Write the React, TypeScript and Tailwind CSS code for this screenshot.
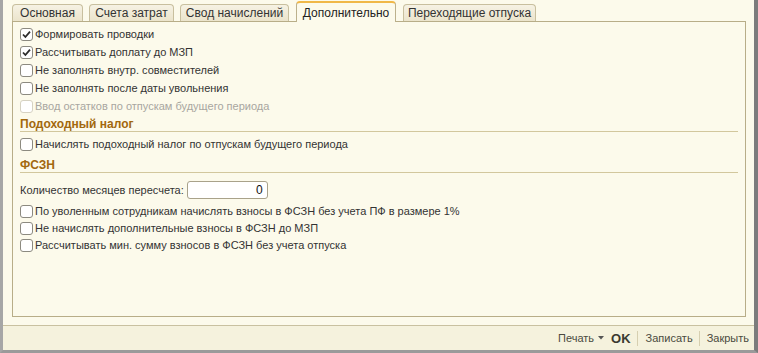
import React from 'react';

const tabs = [
  { label: 'Основная', w: 'w-[71px]', ml: 'ml-0' },
  { label: 'Счета затрат', w: 'w-[85px]', ml: 'ml-[6px]' },
  { label: 'Свод начислений', w: 'w-[109px]', ml: 'ml-[6px]' },
  { label: 'Дополнительно', w: 'w-[100px]', ml: 'ml-[7px]', active: true },
  { label: 'Переходящие отпуска', w: 'w-[133px]', ml: 'ml-[7px]' },
];

function Check({ checked, disabled }: { checked?: boolean; disabled?: boolean }) {
  return (
    <span
      className={`flex h-[13px] w-[13px] shrink-0 items-center justify-center rounded-[3px] border bg-white ${
        disabled ? 'border-[#d6d2c2]' : 'border-[#8c8a80]'
      }`}
    >
      {checked && (
        <svg width="9" height="9" viewBox="0 0 9 9">
          <path d="M1 4.5 L3.4 7 L8 1.6" fill="none" stroke="#2b2b2b" strokeWidth="1.8" />
        </svg>
      )}
    </span>
  );
}

function Row({ label, checked, disabled, h = 'h-[18px]' }: { label: string; checked?: boolean; disabled?: boolean; h?: string }) {
  return (
    <div className={`flex items-center gap-[2px] ${h}`}>
      <Check checked={checked} disabled={disabled} />
      <span className={disabled ? 'text-[#a8a6a0]' : 'text-[#333333]'}>{label}</span>
    </div>
  );
}

function Header({ label }: { label: string }) {
  return (
    <div className="flex h-[17px] items-center border-b border-[#d2c79d] pt-[1px] text-[12px] font-bold text-[#a2680e]">
      {label}
    </div>
  );
}

export default function App() {
  return (
    <div
      className="flex h-[353px] w-[758px] flex-col overflow-hidden border-b-[3px] border-l-[3px] border-r-[4px] border-b-[#9a9a9a] border-l-[#a6a6a6] border-r-[#7c7c7c] bg-[#fcfaeb] text-[11px] leading-none"
      style={{ fontFamily: '"Liberation Sans", Arial, sans-serif' }}
    >
      <div className="ml-[9px] flex h-[21px] items-end pt-[1px]">
        {tabs.map((t) =>
          t.active ? (
            <div
              key={t.label}
              className={`${t.w} ${t.ml} relative z-10 -mb-px flex h-[21px] items-center justify-center rounded-t-[4px] border border-b-0 border-[#bcb18c] border-t-[#f0b848] border-t-2 bg-[#fcfaeb] text-[12px] text-[#222222]`}
            >
              {t.label}
            </div>
          ) : (
            <div
              key={t.label}
              className={`${t.w} ${t.ml} flex h-[17px] items-center justify-center rounded-t-[4px] border border-b-0 border-[#c8bf9e] bg-gradient-to-b from-[#f6f2e4] to-[#ebe4cc] text-[12px] text-[#333333]`}
            >
              {t.label}
            </div>
          ),
        )}
      </div>

      <div className="ml-[9px] h-[296px] w-[734px] border border-[#b8ad88] px-[7px] pt-[3px]">
        <Row label="Формировать проводки" checked />
        <Row label="Рассчитывать доплату до МЗП" checked />
        <Row label="Не заполнять внутр. совместителей" />
        <Row label="Не заполнять после даты увольнения" />
        <Row label="Ввод остатков по отпускам будущего периода" disabled />

        <Header label="Подоходный налог" />
        <div className="mt-[3px]">
          <Row label="Начислять подоходный налог по отпускам будущего периода" />
        </div>

        <div className="mt-[3px]">
          <Header label="ФСЗН" />
        </div>

        <div className="mt-[8px] flex h-[18px] items-center gap-[3px] text-[#333333]">
          <span>Количество месяцев пересчета:</span>
          <div className="flex h-[18px] w-[81px] items-center justify-end rounded-[3px] border border-[#a9a28a] bg-white pr-[4px] text-[12px] text-[#111111]">
            0
          </div>
        </div>

        <div className="mt-[4px]">
          <Row h="h-[17px]" label="По уволенным сотрудникам начислять взносы в ФСЗН без учета ПФ в размере 1%" />
          <Row h="h-[17px]" label="Не начислять дополнительные взносы в ФСЗН до МЗП" />
          <Row h="h-[17px]" label="Рассчитывать мин. сумму взносов в ФСЗН без учета отпуска" />
        </div>
      </div>

      <div className="mt-[8px] flex flex-1 items-center justify-end border-t border-[#c9c1a0] bg-[#f5f2dd] pr-[5px] text-[#4a4a40]">
        <div className="flex items-center">
          <span>Печать</span>
          <svg className="ml-[4px]" width="6" height="4" viewBox="0 0 6 4">
            <path d="M0 0 H6 L3 3.5 Z" fill="#555" />
          </svg>
          <span className="ml-[7px] font-bold text-[13px] text-[#3a3a30]">OK</span>
          <span className="ml-[6px] h-[15px] w-px bg-[#d6cfb0]" />
          <span className="ml-[8px]">Записать</span>
          <span className="ml-[6px] h-[15px] w-px bg-[#d6cfb0]" />
          <span className="ml-[7px]">Закрыть</span>
        </div>
      </div>
    </div>
  );
}
